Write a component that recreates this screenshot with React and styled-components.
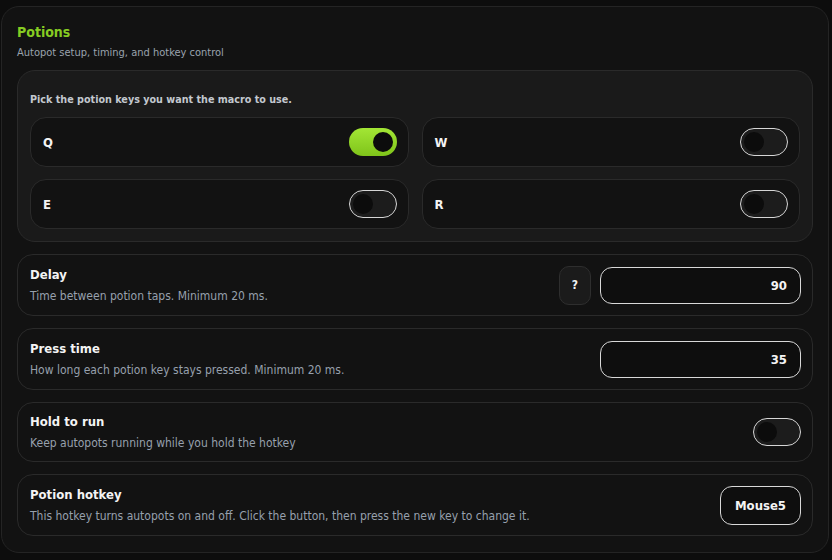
import React from 'react';
import styled, { createGlobalStyle } from 'styled-components';

const FONT = '"DejaVu Sans Condensed", "DejaVu Sans", sans-serif';

const Global = createGlobalStyle`
  body {
    margin: 0;
    background: #0d0d0d;
    font-family: ${FONT};
    color: #f2f2f2;
  }
`;

const Page = styled.div`
  padding: 6px 3px 7px 1px;
`;

const Panel = styled.section`
  background: #121212;
  border: 1px solid #242424;
  border-radius: 18px;
  padding: 17px 15px 16px 15px;
  display: flex;
  flex-direction: column;
`;

const Title = styled.h1`
  margin: 0;
  font-size: 14px;
  line-height: 17px;
  font-weight: 700;
  color: #86cc22;
`;

const Subtitle = styled.p`
  margin: 5px 0 0;
  font-size: 11px;
  line-height: 14px;
  color: #9aa3ae;
`;

const Stack = styled.div`
  display: flex;
  flex-direction: column;
  gap: 12px;
  margin-top: 10px;
`;

const KeySection = styled.div`
  background: #1a1a1a;
  border: 1px solid #2a2a2a;
  border-radius: 18px;
  padding: 22px 12px 12px;
`;

const Hint = styled.p`
  margin: 0 0 10px;
  font-size: 10.7px;
  line-height: 14px;
  font-weight: 700;
  color: #c3c8cf;
`;

const KeyGrid = styled.div`
  display: grid;
  grid-template-columns: 1fr 1fr;
  gap: 12px 13px;
`;

const KeyCard = styled.div`
  height: 50px;
  box-sizing: border-box;
  background: #121212;
  border: 1px solid #2a2a2a;
  border-radius: 16px;
  padding: 0 11px 0 12px;
  display: flex;
  align-items: center;
  justify-content: space-between;
`;

const KeyLabel = styled.span`
  font-size: 13px;
  font-weight: 700;
  color: #f4f4f4;
`;

const Toggle = styled.div`
  width: 48px;
  height: 28px;
  box-sizing: border-box;
  border-radius: 14px;
  display: flex;
  align-items: center;
  justify-content: ${p => (p.$on ? 'flex-end' : 'flex-start')};
  background: ${p => (p.$on ? 'linear-gradient(180deg, #a3e635, #7fc41a)' : '#1c1c1c')};
  border: ${p => (p.$on ? 'none' : '1.5px solid #d6d6d6')};
  padding: ${p => (p.$on ? '0 4px' : '0 3px')};
`;

const Knob = styled.span`
  width: 20px;
  height: 20px;
  border-radius: 50%;
  background: #0c0c0c;
`;

const Row = styled.div`
  background: #121212;
  border: 1px solid #2a2a2a;
  border-radius: 16px;
  height: ${p => p.$h || 62}px;
  box-sizing: border-box;
  padding: 0 11px 0 12px;
  display: flex;
  align-items: center;
  justify-content: space-between;
`;

const RowText = styled.div`
  display: flex;
  flex-direction: column;
  gap: 6px;
`;

const RowTitle = styled.span`
  font-size: 13px;
  line-height: 16px;
  font-weight: 700;
  color: #f4f4f4;
`;

const RowDesc = styled.span`
  font-size: 12px;
  line-height: 14px;
  color: #97a0ad;
`;

const Controls = styled.div`
  display: flex;
  align-items: center;
  gap: 9px;
`;

const HelpButton = styled.button`
  width: 32px;
  height: 39px;
  border-radius: 10px;
  background: #1b1b1b;
  border: 1px solid #2e2e2e;
  color: #f2f2f2;
  font: 700 12px ${FONT};
  padding: 0;
`;

const NumberInput = styled.input`
  width: 201px;
  height: 37px;
  box-sizing: border-box;
  border: 1.5px solid #d8d8d8;
  border-radius: 12px;
  background: #0e0e0e;
  color: #f4f4f4;
  text-align: right;
  padding: 0 13px;
  font: 700 13px ${FONT};
  outline: none;
`;

const KeyButton = styled.button`
  height: 39px;
  min-width: 81px;
  box-sizing: border-box;
  border: 1.5px solid #d8d8d8;
  border-radius: 12px;
  background: #0e0e0e;
  color: #f4f4f4;
  font: 700 13px ${FONT};
  padding: 0 12px;
`;

const keys = [
  { k: 'Q', on: true },
  { k: 'W', on: false },
  { k: 'E', on: false },
  { k: 'R', on: false },
];

export default function App() {
  return (
    <Page>
      <Global />
      <Panel>
        <Title>Potions</Title>
        <Subtitle>Autopot setup, timing, and hotkey control</Subtitle>
        <Stack>
          <KeySection>
            <Hint>Pick the potion keys you want the macro to use.</Hint>
            <KeyGrid>
              {keys.map(({ k, on }) => (
                <KeyCard key={k}>
                  <KeyLabel>{k}</KeyLabel>
                  <Toggle $on={on}><Knob /></Toggle>
                </KeyCard>
              ))}
            </KeyGrid>
          </KeySection>

          <Row>
            <RowText>
              <RowTitle>Delay</RowTitle>
              <RowDesc>Time between potion taps. Minimum 20 ms.</RowDesc>
            </RowText>
            <Controls>
              <HelpButton>?</HelpButton>
              <NumberInput defaultValue="90" />
            </Controls>
          </Row>

          <Row>
            <RowText>
              <RowTitle>Press time</RowTitle>
              <RowDesc>How long each potion key stays pressed. Minimum 20 ms.</RowDesc>
            </RowText>
            <NumberInput defaultValue="35" />
          </Row>

          <Row $h={60}>
            <RowText>
              <RowTitle>Hold to run</RowTitle>
              <RowDesc>Keep autopots running while you hold the hotkey</RowDesc>
            </RowText>
            <Toggle><Knob /></Toggle>
          </Row>

          <Row>
            <RowText>
              <RowTitle>Potion hotkey</RowTitle>
              <RowDesc>This hotkey turns autopots on and off. Click the button, then press the new key to change it.</RowDesc>
            </RowText>
            <KeyButton>Mouse5</KeyButton>
          </Row>
        </Stack>
      </Panel>
    </Page>
  );
}
